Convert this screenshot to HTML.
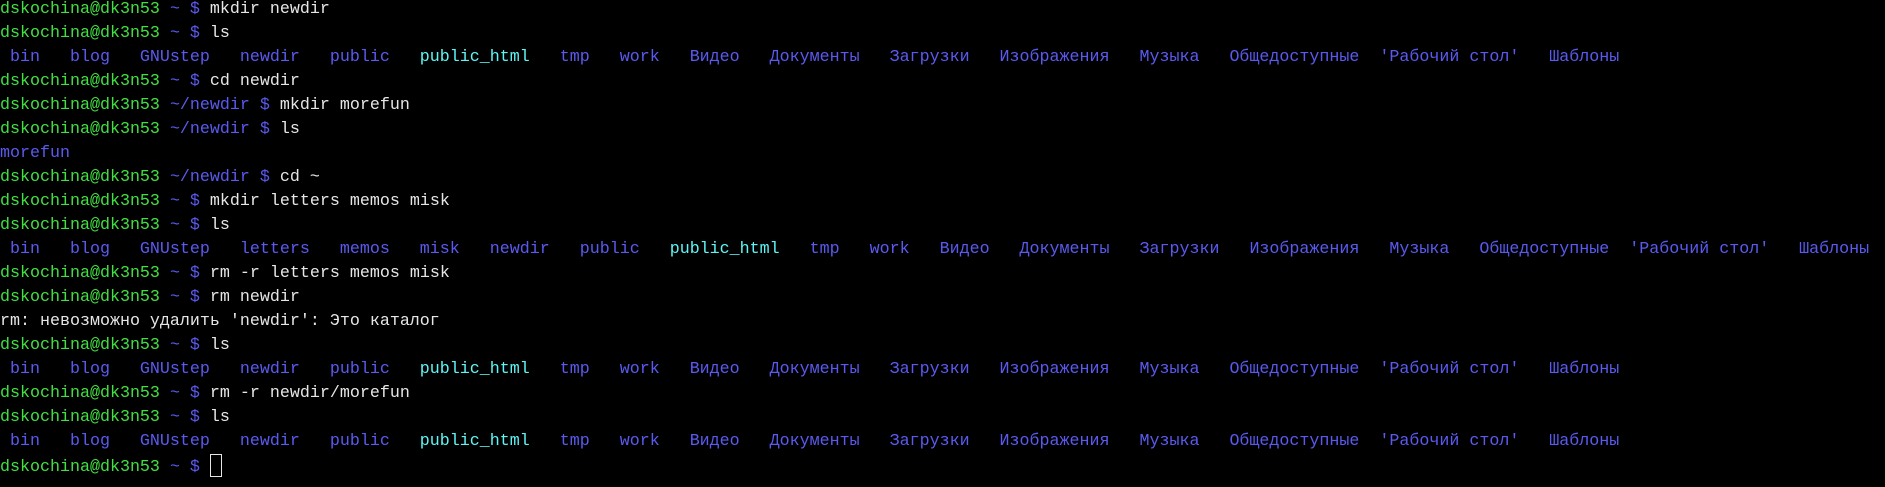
<!DOCTYPE html>
<html><head><meta charset="utf-8"><style>
html,body{margin:0;padding:0;background:#000;width:1885px;height:487px;overflow:hidden}
pre{margin:0;position:absolute;top:-2px;left:0;font-family:"Liberation Mono","DejaVu Sans Mono",monospace;font-size:16.67px;line-height:24px;color:#e6e6e6;white-space:pre}
.g{color:#42e042}.b{color:#5a5af0}.c{color:#5ff5f5}
.cur{display:inline-block;width:10px;height:23px;border:1px solid #e6e6e6;vertical-align:-6px;box-sizing:border-box;width:12px}
</style></head><body><pre><span class="g">dskochina@dk3n53</span> <span class="b">~ $</span> mkdir newdir
<span class="g">dskochina@dk3n53</span> <span class="b">~ $</span> ls
<span class="b"> bin   blog   GNUstep   newdir   public  </span><span class="c"> public_html</span><span class="b">   tmp   work   Видео   Документы   Загрузки   Изображения   Музыка   Общедоступные  'Рабочий стол'   Шаблоны</span>
<span class="g">dskochina@dk3n53</span> <span class="b">~ $</span> cd newdir
<span class="g">dskochina@dk3n53</span> <span class="b">~/newdir $</span> mkdir morefun
<span class="g">dskochina@dk3n53</span> <span class="b">~/newdir $</span> ls
<span class="b">morefun</span>
<span class="g">dskochina@dk3n53</span> <span class="b">~/newdir $</span> cd ~
<span class="g">dskochina@dk3n53</span> <span class="b">~ $</span> mkdir letters memos misk
<span class="g">dskochina@dk3n53</span> <span class="b">~ $</span> ls
<span class="b"> bin   blog   GNUstep   letters   memos   misk   newdir   public  </span><span class="c"> public_html</span><span class="b">   tmp   work   Видео   Документы   Загрузки   Изображения   Музыка   Общедоступные  'Рабочий стол'   Шаблоны</span>
<span class="g">dskochina@dk3n53</span> <span class="b">~ $</span> rm -r letters memos misk
<span class="g">dskochina@dk3n53</span> <span class="b">~ $</span> rm newdir
rm: невозможно удалить 'newdir': Это каталог
<span class="g">dskochina@dk3n53</span> <span class="b">~ $</span> ls
<span class="b"> bin   blog   GNUstep   newdir   public  </span><span class="c"> public_html</span><span class="b">   tmp   work   Видео   Документы   Загрузки   Изображения   Музыка   Общедоступные  'Рабочий стол'   Шаблоны</span>
<span class="g">dskochina@dk3n53</span> <span class="b">~ $</span> rm -r newdir/morefun
<span class="g">dskochina@dk3n53</span> <span class="b">~ $</span> ls
<span class="b"> bin   blog   GNUstep   newdir   public  </span><span class="c"> public_html</span><span class="b">   tmp   work   Видео   Документы   Загрузки   Изображения   Музыка   Общедоступные  'Рабочий стол'   Шаблоны</span>
<span class="g">dskochina@dk3n53</span> <span class="b">~ $</span> <span class="cur"></span></pre></body></html>
